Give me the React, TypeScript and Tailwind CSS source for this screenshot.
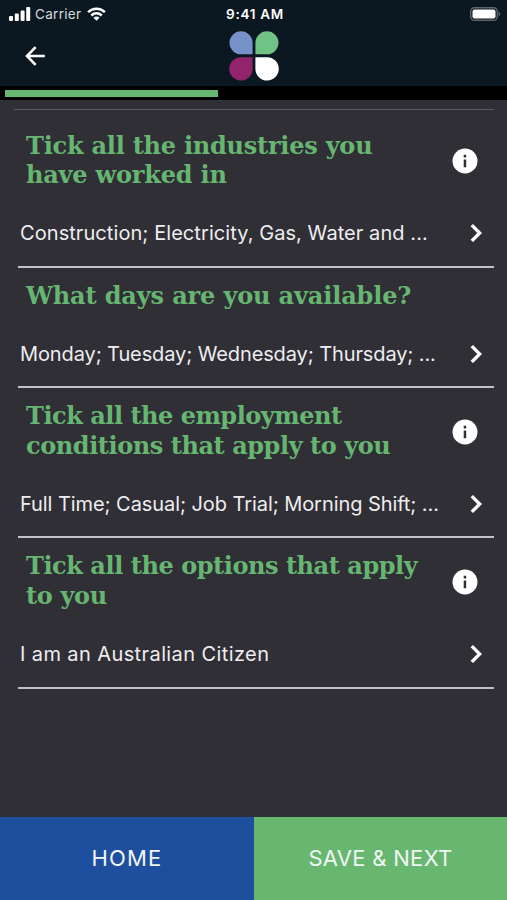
import React from 'react';

// ============================================================
// Data
// ============================================================

type Line = { text: string; tracking: string };

type Question = {
  id: string;
  title: Line[];
  answer: Line;
  hasInfo: boolean;
};

const questions: Question[] = [
  {
    id: 'industries',
    title: [
      { text: 'Tick all the industries you', tracking: 'tracking-[-0.23px]' },
      { text: 'have worked in', tracking: 'tracking-[-0.2px]' },
    ],
    answer: { text: 'Construction; Electricity, Gas, Water and ...', tracking: 'tracking-[0.07px]' },
    hasInfo: true,
  },
  {
    id: 'days',
    title: [{ text: 'What days are you available?', tracking: 'tracking-[-0.14px]' }],
    answer: { text: 'Monday; Tuesday; Wednesday; Thursday; ...', tracking: 'tracking-[-0.11px]' },
    hasInfo: false,
  },
  {
    id: 'conditions',
    title: [
      { text: 'Tick all the employment', tracking: 'tracking-[-0.48px]' },
      { text: 'conditions that apply to you', tracking: 'tracking-[-0.43px]' },
    ],
    answer: { text: 'Full Time; Casual; Job Trial; Morning Shift; ...', tracking: 'tracking-[-0.07px]' },
    hasInfo: true,
  },
  {
    id: 'options',
    title: [
      { text: 'Tick all the options that apply', tracking: 'tracking-[-0.44px]' },
      { text: 'to you', tracking: 'tracking-[-0.35px]' },
    ],
    answer: { text: 'I am an Australian Citizen', tracking: 'tracking-[0.4px]' },
    hasInfo: true,
  },
];

// ============================================================
// Icons
// ============================================================

function SignalIcon() {
  return (
    <svg className="h-[14px] w-[22px]" viewBox="0 0 22 14" fill="#fff">
      <rect x="0" y="9" width="4" height="5" rx="1" />
      <rect x="5.8" y="6.5" width="4" height="7.5" rx="1" />
      <rect x="11.6" y="3.5" width="4" height="10.5" rx="1" />
      <rect x="17.2" y="0" width="4" height="14" rx="1" />
    </svg>
  );
}

function WifiIcon() {
  return (
    <svg className="h-[14px] w-[19px]" viewBox="0 0 19 14" fill="none" stroke="#fff" strokeWidth="2.5">
      <path d="M1.1 5.1a12 12 0 0 1 16.8 0" />
      <path d="M4.3 8.5a7.4 7.4 0 0 1 10.4 0" />
      <path d="M9.5 13.7 6.5 10.7a4.2 4.2 0 0 1 6 0z" fill="#fff" stroke="none" />
    </svg>
  );
}

function BatteryIcon() {
  return (
    <svg className="h-[14px] w-[31px]" viewBox="0 0 31 14" fill="none">
      <rect x="0.7" y="0.7" width="26.6" height="12.6" rx="3.8" stroke="#5d656b" strokeWidth="1.4" />
      <rect x="2.5" y="2.4" width="23" height="9.2" rx="2" fill="#fff" />
      <path d="M28.6 4.6c2.2.8 2.2 4 0 4.8z" fill="#5d656b" />
    </svg>
  );
}

function BackIcon() {
  return (
    <svg className="h-5 w-5" viewBox="0 0 20 20" fill="none" stroke="#fff" strokeWidth="2.6">
      <path d="M19.8 10H2.8M10.6 1.2 2 10l8.6 8.8" />
    </svg>
  );
}

function Logo() {
  return (
    <svg className="h-[50px] w-[50px]" viewBox="0 0 50 50">
      <path d="M12 0.3A11.6 11.6 0 0 1 23.6 11.9V23.3H12A11.5 11.5 0 0 1 12 0.3z" fill="#7791cb" />
      <path d="M38 0.3A11.5 11.5 0 0 1 38 23.3H26.4V11.9A11.6 11.6 0 0 1 38 0.3z" fill="#71c285" />
      <path d="M12 26.2H23.6V38A11.7 11.7 0 1 1 12 26.2z" fill="#91246b" />
      <path d="M26.4 26.2H38A11.7 11.7 0 1 1 26.4 38z" fill="#fff" />
    </svg>
  );
}

function InfoIcon() {
  return (
    <svg className="mt-[2px] h-[26px] w-[26px]" viewBox="0 0 26 26">
      <circle cx="13" cy="13" r="12.5" fill="#fff" />
      <path d="M11.7 6.8h2.5v2.6h-2.5zM11.7 11.4h2.5v7.8h-2.5z" fill="#302f36" />
    </svg>
  );
}

function ChevronIcon() {
  return (
    <svg className="h-5 w-3" viewBox="0 0 12 20" fill="none" stroke="#fff" strokeWidth="3.4">
      <path d="M1.8 2.1 9.7 10l-7.9 7.9" />
    </svg>
  );
}

// ============================================================
// Sections
// ============================================================

function StatusBar() {
  return (
    <div className="grid h-7 grid-cols-3 items-center pl-[9px] pr-[6px] font-['Inter',sans-serif] text-[13.5px] text-white">
      <div className="flex items-center">
        <SignalIcon />
        <span className="ml-1 mr-[6px] tracking-[0.3px] text-[#d5dadd]">Carrier</span>
        <WifiIcon />
      </div>
      <span className="text-center font-semibold tracking-[0.7px]">9:41 AM</span>
      <div className="flex justify-end">
        <BatteryIcon />
      </div>
    </div>
  );
}

function Header() {
  return (
    <header className="h-[86px] bg-[#0c1821]">
      <StatusBar />
      <div className="grid h-14 grid-cols-3 items-center pl-[25px] pr-[24px]">
        <button type="button" aria-label="Back" className="w-5">
          <BackIcon />
        </button>
        <div className="flex justify-center">
          <Logo />
        </div>
      </div>
    </header>
  );
}

function QuestionItem({ question }: { question: Question }) {
  return (
    <section className="border-b-2 border-[#c2c0c8]">
      <div className="flex items-center justify-between pb-[8.5px] pl-2 pr-4 pt-[13px]">
        <h2 className="whitespace-nowrap font-['DejaVu_Serif',serif] text-[24px] font-bold leading-[29.3px] text-[#66b671]">
          {question.title.map((line) => (
            <span key={line.text} className="block">
              <span className={line.tracking}>{line.text}</span>
            </span>
          ))}
        </h2>
        {question.hasInfo && <InfoIcon />}
      </div>
      <div className="flex h-[68px] items-center justify-between pl-0.5 pr-3 pt-[2.6px]">
        <p className="whitespace-nowrap font-['Inter',sans-serif] text-[20px] text-[#eeedf0]">
          <span className={question.answer.tracking}>{question.answer.text}</span>
        </p>
        <ChevronIcon />
      </div>
    </section>
  );
}

function Footer() {
  return (
    <footer className="flex h-[83px] font-['Inter',sans-serif] text-[22px] text-[#f0f6f4]">
      <button type="button" className="w-[254px] bg-[#1e4f9f]">
        <span className="tracking-[1.2px]">HOME</span>
      </button>
      <button type="button" className="flex-1 bg-[#68b771]">
        <span className="tracking-[0.3px]">SAVE &amp; NEXT</span>
      </button>
    </footer>
  );
}

export default function App() {
  return (
    <div className="flex h-[900px] w-[507px] flex-col overflow-hidden bg-[#302f36]">
      <Header />
      <div className="h-[13.5px] bg-black pl-[5px] pt-1">
        <div className="h-[6.5px] w-[213px] bg-[#68b771]" />
      </div>
      <main className="flex-1 pt-[9.5px]">
        <div className="ml-[14px] mr-[13px] h-px bg-[#5c5b61]" />
        <div className="ml-[18px] mr-[13px] pt-[7.5px]">
          {questions.map((question) => (
            <QuestionItem key={question.id} question={question} />
          ))}
        </div>
      </main>
      <Footer />
    </div>
  );
}
